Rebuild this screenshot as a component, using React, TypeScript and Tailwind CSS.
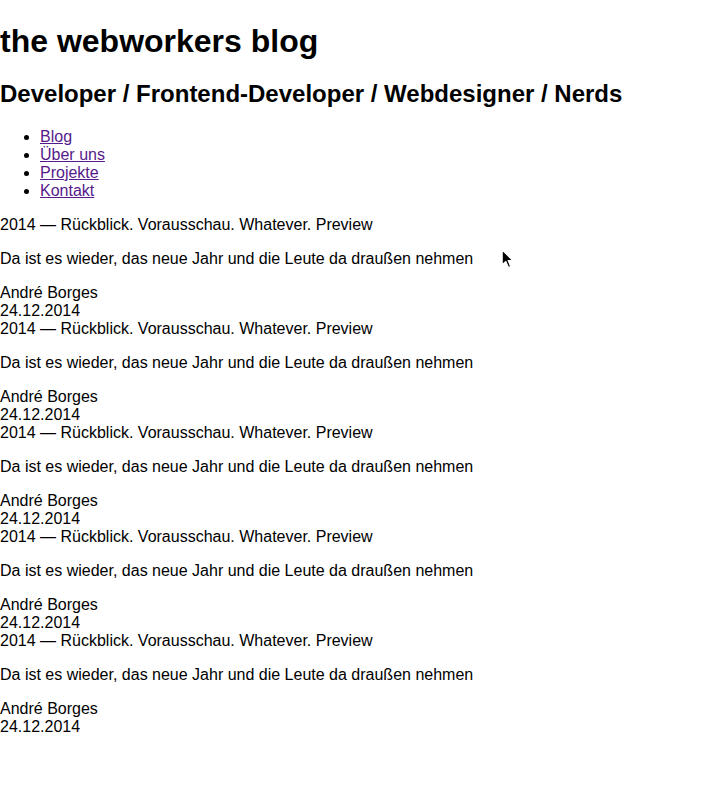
import React from "react";

const posts = Array.from({ length: 5 });

export default function App() {
  return (
    <div className="relative min-h-[802px] bg-white text-black text-[16px] leading-[18px] font-['Liberation_Sans',Arial,sans-serif]">
      <header>
        <h1 className="text-[32px] leading-[37px] font-bold my-0 pt-[23px]">the webworkers blog</h1>
        <h2 className="text-[24px] leading-[28px] font-bold mt-[20px] mb-[20px]">
          Developer / Frontend-Developer / Webdesigner / Nerds
        </h2>
        <nav>
          <ul className="list-disc pl-10 my-4">
            {["Blog", "Über uns", "Projekte", "Kontakt"].map((l) => (
              <li key={l}>
                <a href="#" className="text-[#551a8b] underline">
                  {l}
                </a>
              </li>
            ))}
          </ul>
        </nav>
      </header>
      <main>
        {posts.map((_, i) => (
          <article key={i}>
            <div>2014 — Rückblick. Vorausschau. Whatever. Preview</div>
            <p className="my-4">Da ist es wieder, das neue Jahr und die Leute da draußen nehmen</p>
            <div>André Borges</div>
            <div>24.12.2014</div>
          </article>
        ))}
      </main>
      <svg
        className="absolute left-[501px] top-[249px]"
        width="14"
        height="21"
        viewBox="0 0 13 20"
      >
        <path
          d="M1 1 L1 15 L4.5 11.8 L7 17.5 L9 16.6 L6.6 11 L11 11 Z"
          fill="#000"
          stroke="#fff"
          strokeWidth="1"
          strokeLinejoin="round"
        />
      </svg>
    </div>
  );
}
